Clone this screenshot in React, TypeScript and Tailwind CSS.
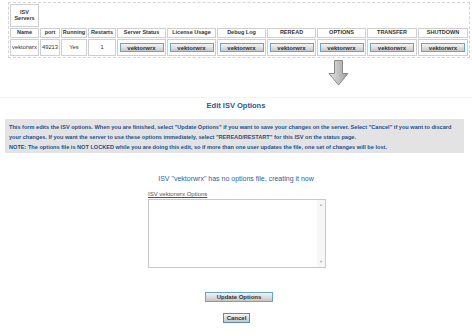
import React from 'react';

const services = ['Server Status', 'License Usage', 'Debug Log', 'REREAD', 'OPTIONS', 'TRANSFER', 'SHUTDOWN'];
const colWidths = [29, 20, 26, 28, 49, 49, 49, 49, 49, 50, 50];

const cell = 'border border-[#cfcfcf] text-center align-middle p-0 leading-none';

const ServerButton: React.FC = () => (
  <button className="w-[44px] h-[9px] mx-auto block border border-[#62a6cf] bg-gradient-to-b from-[#f4f4f4] to-[#c9c9c9] text-[6px] font-bold leading-none text-[#333]">
    vektorwrx
  </button>
);

const DownArrow: React.FC = () => (
  <svg width="21" height="27" viewBox="0 0 21 27">
    <defs>
      <linearGradient id="ag" x1="0" y1="0" x2="1" y2="0">
        <stop offset="0" stopColor="#e6e6e6" />
        <stop offset="1" stopColor="#9c9c9c" />
      </linearGradient>
    </defs>
    <path d="M6.5 1.5 H14.5 V14.5 H20 L10.5 26 L1 14.5 H6.5 Z" fill="url(#ag)" stroke="#8a8a8a" strokeWidth="1" />
  </svg>
);

export default function App() {
  return (
    <div className="w-[472px] h-[336px] bg-white overflow-hidden font-['Liberation_Sans',Arial,sans-serif]">
      {/* status table */}
      <div className="ml-[8px] mt-[2px] w-[462px] border border-dashed border-[#d4d4d4]">
        <table className="table-fixed border-separate border-spacing-[1px] w-full text-[#333]">
          <colgroup>
            {colWidths.map((w, i) => (
              <col key={i} style={{ width: w }} />
            ))}
          </colgroup>
          <tbody>
            <tr>
              <td className={`${cell} h-[23px] text-[5.5px] font-bold`}>
                ISV
                <br />
                Servers
              </td>
              <td colSpan={10} />
            </tr>
            <tr>
              {['Name', 'port', 'Running', 'Restarts', ...services].map((h) => (
                <td key={h} className={`${cell} h-[10px] text-[5.5px] font-bold whitespace-nowrap`}>
                  {h}
                </td>
              ))}
            </tr>
            <tr>
              <td className={`${cell} h-[17px] text-[5.8px]`}>vektorwrx</td>
              <td className={`${cell} text-[5.8px]`}>49213</td>
              <td className={`${cell} text-[5.8px]`}>Yes</td>
              <td className={`${cell} text-[5.8px]`}>1</td>
              {services.map((s) => (
                <td key={s} className={cell}>
                  <ServerButton />
                </td>
              ))}
            </tr>
          </tbody>
        </table>
      </div>

      <div className="pl-[328px] mt-[1px] h-[27px]">
        <DownArrow />
      </div>

      <div className="mt-[11px] border-t border-[#f3f3f3]" />

      <h1 className="mt-[3px] text-center text-[7.5px] font-bold leading-[10px] text-[#2a5896]">Edit ISV Options</h1>

      <div className="ml-[5px] mt-[8px] w-[459px] bg-[#e3e3e3] px-[4px] pt-[3px] pb-[1px] text-[5.6px] font-bold leading-[10px] text-[#21508f] whitespace-nowrap">
        <p>
          This form edits the ISV options. When you are finished, select "Update Options" if you want to save your changes on the server. Select "Cancel" if you want to discard
          <br />
          your changes. If you want the server to use these options immediately, select "REREAD/RESTART" for this ISV on the status page.
        </p>
        <p>NOTE: The options file is NOT LOCKED while you are doing this edit, so if more than one user updates the file, one set of changes will be lost.</p>
      </div>

      <p className="mt-[21px] text-center text-[7px] leading-[10px] text-[#2f61a3]">
        ISV "vektorwrx" has no options file, creating it now
      </p>

      <div className="ml-[148px] mt-[6px] w-[178px]">
        <div className="text-[6px] leading-[8px] text-[#555] underline">ISV vektorwrx Options</div>
        <div className="mt-[1px] flex h-[69px] border border-[#c8c8c8] bg-white">
          <div className="flex-1" />
          <div className="w-[8px] flex flex-col justify-between items-center bg-[#f7f7f7] py-[3px] text-[4px] leading-none text-[#b0b0b0]">
            <span>▲</span>
            <span>▼</span>
          </div>
        </div>
      </div>

      <div className="mt-[24px] flex justify-center">
        <button className="w-[68px] h-[10px] ml-[6px] border border-[#62a6cf] bg-gradient-to-b from-[#f4f4f4] to-[#c6c6c6] text-[6px] font-bold leading-none text-[#333]">
          Update Options
        </button>
      </div>
      <div className="mt-[11px] flex justify-center">
        <button className="w-[27px] h-[10px] ml-[1px] border border-[#5a8fb0] bg-gradient-to-b from-[#f4f4f4] to-[#c6c6c6] text-[6px] font-bold leading-none text-[#333]">
          Cancel
        </button>
      </div>
    </div>
  );
}
